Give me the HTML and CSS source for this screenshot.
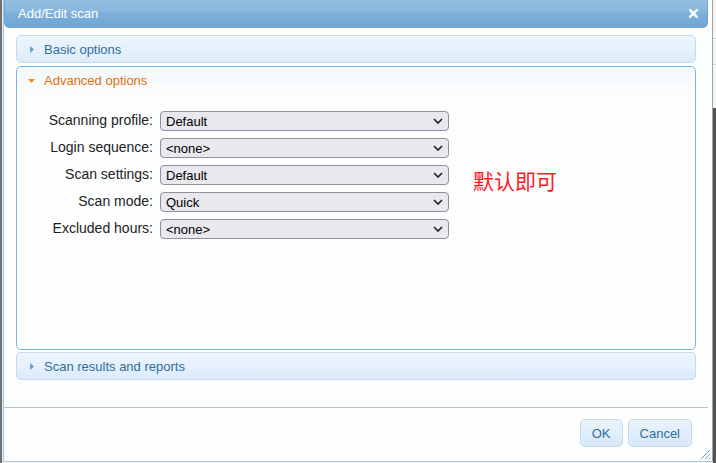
FILE: index.html
```html
<!DOCTYPE html>
<html>
<head>
<meta charset="utf-8">
<link rel="stylesheet" href="styles.css">
</head>
<body>
<div class="bg-left"></div>
<div class="dialog">
  <div class="titlebar">
    <span class="title">Add/Edit scan</span>
    <svg class="close" width="9" height="9" viewBox="0 0 9 9"><path d="M1.2 1.2L7.8 7.8M7.8 1.2L1.2 7.8" stroke="#fff" stroke-width="2.4" stroke-linecap="square"/></svg>
  </div>
  <div class="content">
    <div class="acc-header">
      <svg class="tri-right" width="4" height="7" viewBox="0 0 4 7"><path d="M0 0L4 3.5L0 7Z" fill="#6e9fcc"/></svg>
      <span>Basic options</span>
    </div>
    <div class="acc-panel">
      <div class="acc-active">
        <svg class="tri-down" width="7" height="4" viewBox="0 0 7 4"><path d="M0 0L7 0L3.5 4Z" fill="#ef9412"/></svg>
        <span>Advanced options</span>
      </div>
      <div class="panel-body">
        <div class="form">
          <label class="lbl">Scanning profile:</label>
          <div class="select"><span>Default</span><svg width="10" height="6" viewBox="0 0 10 6"><path d="M1 1L5 5L9 1" stroke="#1c1b22" stroke-width="1.6" fill="none"/></svg></div>
          <label class="lbl">Login sequence:</label>
          <div class="select"><span>&lt;none&gt;</span><svg width="10" height="6" viewBox="0 0 10 6"><path d="M1 1L5 5L9 1" stroke="#1c1b22" stroke-width="1.6" fill="none"/></svg></div>
          <label class="lbl">Scan settings:</label>
          <div class="select"><span>Default</span><svg width="10" height="6" viewBox="0 0 10 6"><path d="M1 1L5 5L9 1" stroke="#1c1b22" stroke-width="1.6" fill="none"/></svg></div>
          <label class="lbl">Scan mode:</label>
          <div class="select"><span>Quick</span><svg width="10" height="6" viewBox="0 0 10 6"><path d="M1 1L5 5L9 1" stroke="#1c1b22" stroke-width="1.6" fill="none"/></svg></div>
          <label class="lbl">Excluded hours:</label>
          <div class="select"><span>&lt;none&gt;</span><svg width="10" height="6" viewBox="0 0 10 6"><path d="M1 1L5 5L9 1" stroke="#1c1b22" stroke-width="1.6" fill="none"/></svg></div>
        </div>
        <div class="note">默认即可</div>
      </div>
    </div>
    <div class="acc-header results">
      <svg class="tri-right" width="4" height="7" viewBox="0 0 4 7"><path d="M0 0L4 3.5L0 7Z" fill="#6e9fcc"/></svg>
      <span>Scan results and reports</span>
    </div>
  </div>
  <div class="buttonpane">
    <button class="btn">OK</button>
    <button class="btn">Cancel</button>
  </div>
  <svg class="grip" width="12" height="12" viewBox="0 0 12 12"><path d="M11 2L2 11M11 6L6 11M11 10L10 11" stroke="#7d9dbf" stroke-width="1"/></svg>
</div>
<div class="bg-right">
  <div class="bg-top"></div>
  <div class="bg-dark"></div>
</div>
</body>
</html>
```

FILE: styles.css
```css
html, body {
  margin: 0;
  padding: 0;
}
body {
  width: 716px;
  height: 463px;
  overflow: hidden;
  display: flex;
  align-items: flex-start;
  background: #f4f6f8;
  font-family: "Liberation Sans", Arial, "Noto Sans CJK SC", sans-serif;
  font-size: 13px;
}
.bg-left {
  width: 3px;
  height: 463px;
  flex: none;
  background: linear-gradient(to right, #707070 0 2px, #e3eaf0 2px 3px);
}
.dialog {
  width: 710px;
  height: 462px;
  flex: none;
  box-sizing: border-box;
  border: 1px solid #a6c9e2;
  border-top: none;
  border-right-color: #9aa4ae;
  padding-right: 4px;
  background: #fcfdfd;
  display: flex;
  flex-direction: column;
  position: relative;
}
.titlebar {
  margin-top: -3px;
  height: 31px;
  box-sizing: border-box;
  border: 1px solid #6fa4d2;
  border-radius: 5px;
  background: linear-gradient(#96c0e2 0%, #89b7dd 45%, #7dafd9 55%, #6ea6d4 100%);
  display: flex;
  align-items: center;
  justify-content: space-between;
  padding: 2px 9px 0 13px;
  color: #fff;
}
.title {
  font-size: 13px;
}
.close {
  display: block;
}
.content {
  padding: 7px 12px 0;
}
.acc-header {
  height: 28px;
  box-sizing: border-box;
  border: 1px solid #c5dbec;
  border-radius: 5px;
  background: linear-gradient(#edf5fd 0%, #e6f1fc 50%, #dcebfa 100%);
  display: flex;
  align-items: center;
  gap: 10px;
  padding-left: 13px;
  color: #2e6e9e;
}
.acc-header.results {
  margin-top: 2px;
}
.acc-panel {
  margin-top: 3px;
  height: 284px;
  box-sizing: border-box;
  border: 1px solid #79b7e7;
  border-radius: 5px;
  background: #fcfdfd;
}
.acc-active {
  height: 27px;
  display: flex;
  align-items: center;
  gap: 9px;
  padding-left: 11px;
  color: #e17009;
  border-radius: 5px 5px 0 0;
  background: linear-gradient(#f2f7fb, #fcfdfd);
}
.panel-body {
  display: flex;
  align-items: flex-start;
  padding-top: 17px;
}
.form {
  display: grid;
  grid-template-columns: 136px 289px;
  grid-auto-rows: 20px;
  column-gap: 7px;
  row-gap: 7px;
  align-items: center;
}
.lbl {
  text-align: right;
  color: #222;
  font-size: 14px;
  line-height: 16px;
  margin-top: -2px;
}
.select {
  height: 20px;
  box-sizing: border-box;
  border: 1px solid #8f8f9d;
  border-radius: 4px;
  background: #e9e8ed;
  display: flex;
  align-items: center;
  justify-content: space-between;
  padding: 0 5px 0 5px;
  color: #000;
  font-size: 13px;
}
.select svg {
  display: block;
}
.note {
  margin-left: 24px;
  margin-top: 57px;
  color: #ff1a1a;
  font-family: "Noto Sans CJK SC", sans-serif;
  font-size: 21px;
  line-height: 24px;
}
.buttonpane {
  margin-top: 27px;
  border-top: 1px solid #a6c9e2;
  display: flex;
  justify-content: flex-end;
  gap: 5px;
  padding: 11px 16px 0 0;
}
.btn {
  height: 28px;
  box-sizing: border-box;
  border: 1px solid #c5dbec;
  border-radius: 5px;
  background: linear-gradient(#e9f3fc 0%, #e1eefb 50%, #d7e8f8 100%);
  color: #2e6e9e;
  font-family: "Liberation Sans", Arial, sans-serif;
  font-size: 13px;
  padding: 0 11px;
}
.grip {
  position: absolute;
  right: 1px;
  bottom: 1px;
}
.bg-right {
  flex: 1;
  height: 463px;
  display: flex;
  flex-direction: column;
}
.bg-top {
  height: 108px;
  background: linear-gradient(#f4f6f8 0 38px, #c9d1d9 38px 39px, #f4f6f8 39px 64px, #c9d1d9 64px 65px, #f4f6f8 65px);
}
.bg-dark {
  flex: 1;
  background: #525252;
}
```
